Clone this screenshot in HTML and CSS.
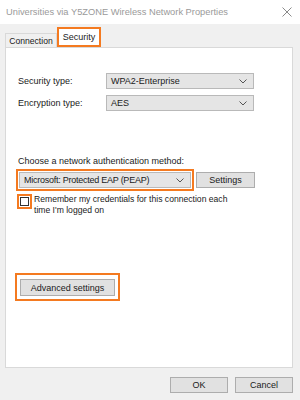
FILE: index.html
```html
<!DOCTYPE html>
<html>
<head>
<meta charset="utf-8">
<link rel="stylesheet" href="styles.css">
</head>
<body>
<div class="window">
  <div class="titlebar">
    <span class="title">Universities via Y5ZONE Wireless Network Properties</span>
    <svg class="close" width="10" height="10" viewBox="0 0 10 10"><path d="M0.5 0.5L9.5 9.5M9.5 0.5L0.5 9.5" stroke="#8a8a8a" stroke-width="1"/></svg>
  </div>
  <div class="content">
    <div class="tabs">
      <div class="tab">Connection</div>
      <div class="tab active"><span class="hl">Security</span></div>
    </div>
    <div class="panel">
      <div class="row">
        <span class="label">Security type:</span>
        <div class="select wide"><span>WPA2-Enterprise</span><svg class="chev" width="8" height="5" viewBox="0 0 8 5"><path d="M0.5 0.5L4 4L7.5 0.5" fill="none" stroke="#555" stroke-width="1"/></svg></div>
      </div>
      <div class="row">
        <span class="label">Encryption type:</span>
        <div class="select wide"><span>AES</span><svg class="chev" width="8" height="5" viewBox="0 0 8 5"><path d="M0.5 0.5L4 4L7.5 0.5" fill="none" stroke="#555" stroke-width="1"/></svg></div>
      </div>
      <div class="auth-label">Choose a network authentication method:</div>
      <div class="auth-row">
        <div class="hl-box">
          <div class="select auth"><span class="auth-text">Microsoft: Protected EAP (PEAP)</span><svg class="chev" width="8" height="5" viewBox="0 0 8 5"><path d="M0.5 0.5L4 4L7.5 0.5" fill="none" stroke="#555" stroke-width="1"/></svg></div>
        </div>
        <div class="btn settings">Settings</div>
      </div>
      <div class="check-row">
        <div class="hl-box cb-box"><div class="checkbox"></div></div>
        <div class="check-text">Remember my credentials for this connection each<br>time I'm logged on</div>
      </div>
      <div class="adv-wrap">
        <div class="hl-box adv-box"><div class="btn adv">Advanced settings</div></div>
      </div>
    </div>
    <div class="footer">
      <div class="btn foot">OK</div>
      <div class="btn foot">Cancel</div>
    </div>
  </div>
</div>
</body>
</html>
```
FILE: styles.css
```css
* { box-sizing: border-box; }
html, body { margin: 0; padding: 0; }
body {
  width: 300px;
  height: 400px;
  overflow: hidden;
  font-family: "Liberation Sans", Arial, sans-serif;
  font-size: 9px;
  color: #1a1a1a;
  background: #f0f0f0;
}
.window { width: 300px; height: 400px; display: flex; flex-direction: column; }
.titlebar {
  height: 24px;
  background: #ffffff;
  display: flex;
  align-items: center;
  justify-content: space-between;
  padding: 0 8px 0 6px;
  flex-shrink: 0;
}
.title { color: #9a9a9a; font-size: 9.3px; }
.close { display: block; }
.content {
  flex: 1;
  background: #f0f0f0;
  padding: 3px 7px 0 5px;
  display: flex;
  flex-direction: column;
}
.tabs { display: flex; align-items: flex-end; height: 20px; }
.tab {
  height: 14px;
  width: 52px;
  border: 1px solid #d9d9d9;
  border-bottom: none;
  background: #f0f0f0;
  display: flex;
  align-items: center;
  justify-content: center;
  font-size: 8.6px;
}
.tab.active {
  width: auto;
  height: 20px;
  border: none;
  background: transparent;
  align-items: stretch;
}
.hl {
  border: 2px solid #f47a20;
  background: #ffffff;
  width: 44px;
  display: flex;
  align-items: center;
  justify-content: center;
  height: 20px;
  font-size: 9px;
}
.panel {
  height: 321px;
  background: #ffffff;
  border: 1px solid #d9d9d9;
  padding: 25px 0 0 12px;
  display: flex;
  flex-direction: column;
}
.row { display: flex; align-items: center; height: 16px; margin-bottom: 6px; }
.label { width: 88px; }
.select {
  height: 16px;
  background: #e5e5e5;
  border: 1px solid #b9b9b9;
  display: flex;
  align-items: center;
  justify-content: space-between;
  padding: 0 6px 0 4px;
}
.select.wide { width: 148px; }
.chev { display: block; }
.auth-label { margin-top: 38px; height: 12px; line-height: 12px; }
.auth-row { display: flex; align-items: center; margin-top: 2px; margin-left: -2px; }
.auth-text { letter-spacing: -0.25px; }
.hl-box { border: 2px solid #f47a20; padding: 1px; }
.select.auth { width: 172px; }
.btn {
  background: #e1e1e1;
  border: 1px solid #adadad;
  display: flex;
  align-items: center;
  justify-content: center;
}
.settings { width: 59px; height: 16px; margin-left: 2px; }
.check-row { display: flex; align-items: flex-start; margin-top: 3px; margin-left: -1px; }
.cb-box { width: 15px; height: 15px; padding: 1px; }
.checkbox { width: 9px; height: 9px; border: 1px solid #333; background: #fff; }
.check-text { margin-left: 2px; margin-top: 0; line-height: 11px; font-size: 8.6px; }
.adv-wrap { margin-top: 57px; margin-left: -3px; }
.adv-box { display: inline-block; padding: 4px 3px 3px 3px; }
.adv { width: 95px; height: 17px; }
.footer { display: flex; justify-content: flex-end; gap: 7px; padding-top: 9px; }
.foot { width: 58px; height: 16px; }
```
